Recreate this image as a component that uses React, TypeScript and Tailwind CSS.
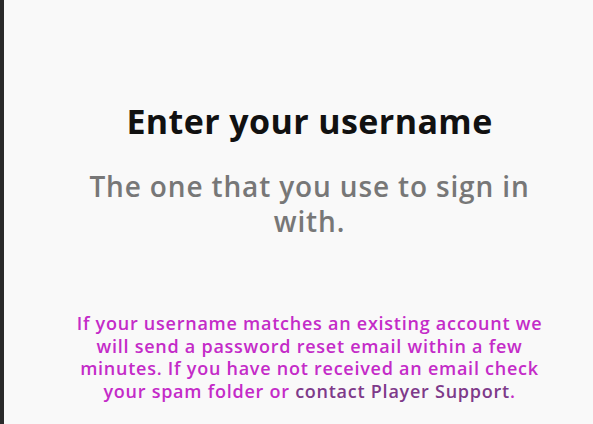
import React from "react";

const App = () => {
  return (
    <div className="flex h-[424px] w-[593px] overflow-hidden bg-[#2a2a2a]" style={{ fontFamily: "'Open Sans', 'Noto Sans', sans-serif" }}>
      <div className="w-[4px] shrink-0 bg-[#2a2a2a]" />
      <div className="flex flex-1 justify-center bg-[#f9f9f9] pl-[40px] pr-[18px]">
        <div className="flex w-[480px] flex-col items-center pt-[100px] text-center">
          <h1 className="text-[34px] font-bold leading-[42px] tracking-[0.4px] text-[#111111]">Enter your username</h1>
          <p className="mt-[27px] w-[452px] text-[28px] font-semibold leading-[35px] tracking-[0.85px] text-[#777777]">
            The one that you use to sign in with.
          </p>
          <p className="mt-[73px] text-[18px] font-semibold leading-[22.5px] tracking-[0.75px] text-[#c42bc8]">
            If your username matches an existing account we will send a password reset email within a few minutes. If you
            have not received an email check your spam folder or <a className="text-[#7e3a8a]">contact Player Support</a>.
          </p>
        </div>
      </div>
    </div>
  );
};

export default App;
